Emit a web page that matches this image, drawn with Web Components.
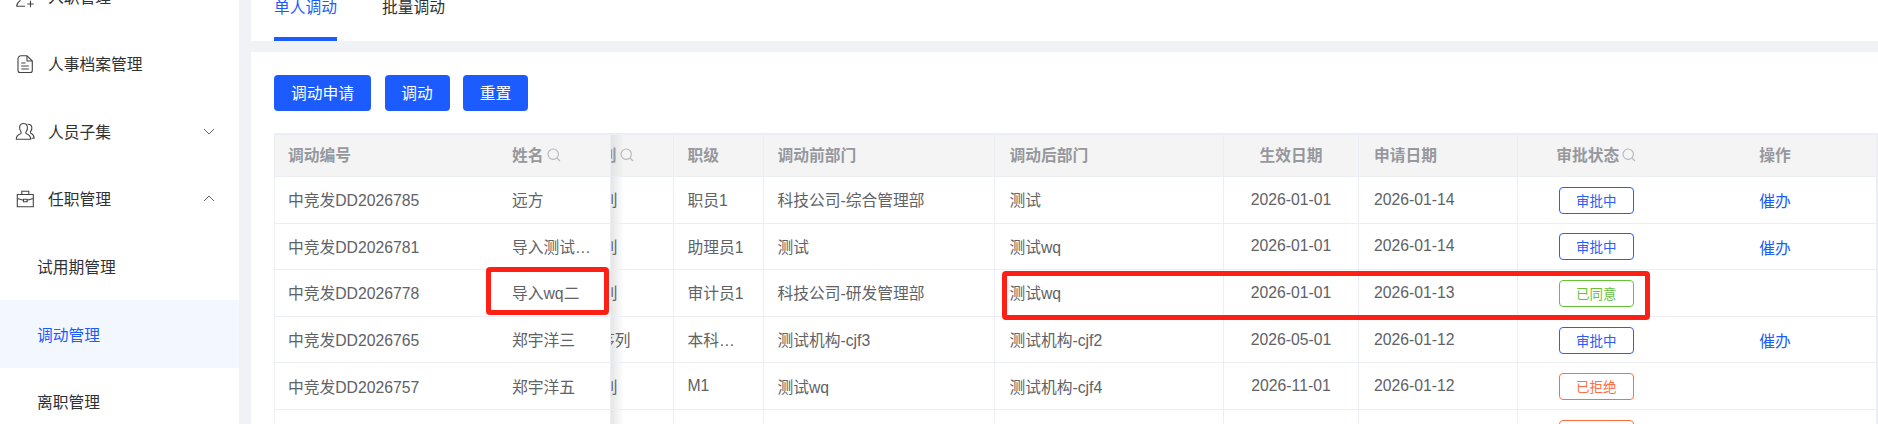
<!DOCTYPE html>
<html lang="zh">
<head>
<meta charset="utf-8">
<title>调动管理</title>
<style>
    html, body { margin: 0; height: 100%; overflow: hidden; background: #f0f2f5; }
    body { font-family: "Liberation Sans", "Noto Sans CJK SC", sans-serif; font-size: 15.75px; }
</style>
</head>
<body>
<hr-page>
    <side-menu slot="side">
        <menu-item icon="add" label="入职管理"></menu-item>
        <menu-item icon="doc" label="人事档案管理"></menu-item>
        <menu-item icon="users" arrow="down" label="人员子集"></menu-item>
        <menu-item icon="case" arrow="up" label="任职管理"></menu-item>
        <menu-item sub label="试用期管理"></menu-item>
        <menu-item sub active label="调动管理"></menu-item>
        <menu-item sub label="离职管理"></menu-item>
    </side-menu>
    <tab-bar slot="tabs">
        <tab-item active>单人调动</tab-item>
        <tab-item>批量调动</tab-item>
    </tab-bar>
    <blue-button slot="actions" style="width:97px">调动申请</blue-button>
    <blue-button slot="actions">调动</blue-button>
    <blue-button slot="actions">重置</blue-button>
    <transfer-table slot="table"></transfer-table>
</hr-page>

<script>
class HrPage extends HTMLElement {
    constructor() {
        super();
        this.attachShadow({ mode: 'open' });
        this.shadowRoot.innerHTML = `
            <style>
                :host {
                    display: flex;
                    position: relative;
                    height: 424px;
                    overflow: hidden;
                    color: #303133;
                }
                .side { width: 239px; flex: none; background: #fff; overflow: hidden; }
                .main { flex: 1; min-width: 0; margin-left: 12px; display: flex; flex-direction: column; }
                .tabs { background: #fff; height: 41px; padding-left: 23px; flex: none; }
                .card { background: #fff; flex: 1; margin-top: 11px; padding-top: 23px; padding-left: 23px; min-height: 0; }
                .actions { display: flex; gap: 13.500px; height: 35.500px; margin-bottom: 22.500px; }
                /* the red marks drawn on the screenshot */
                .mark {
                    position: absolute;
                    box-sizing: border-box;
                    border: 5px solid #ff2015;
                    border-radius: 4px;
                    pointer-events: none;
                }
            </style>
            <div class="side"><slot name="side"></slot></div>
            <div class="main">
                <div class="tabs"><slot name="tabs"></slot></div>
                <div class="card">
                    <div class="actions"><slot name="actions"></slot></div>
                    <slot name="table"></slot>
                </div>
            </div>
            <div class="mark" style="left:486px;top:267px;width:123px;height:47.500px"></div>
            <div class="mark" style="left:1002px;top:270.500px;width:648px;height:49px"></div>
        `;
    }
}

class SideMenu extends HTMLElement {
    constructor() {
        super();
        this.attachShadow({ mode: 'open' });
        this.shadowRoot.innerHTML = `
            <style>
                :host { display: block; margin-top: -37.600px; }
            </style>
            <slot></slot>
        `;
    }
}

const MENU_ICONS = {
    add: '<path d="M1.500 19.300h8.500M1.500 19.300c.4-2.400 1.700-4.500 4-6" stroke-width="1.400"/><path d="M12.300 17h6.400M15.500 13.800v6.400" stroke-width="1.800"/>',
    doc: '<path d="M6 1.800h6L17.300 7V16.500a2 2 0 0 1-2 2H5a2 2 0 0 1-2-2V4.800a3 3 0 0 1 3-3z"/><path d="M12 2v5h5.200M6.300 9h4.200M6.300 12h7.500M6.300 15h7.500"/>',
    users: '<path d="M1.300 17.300c0-3.400 2-4.800 4.300-5.600.7-.3.800-1.300.2-2.200-1-1.300-1.400-2.900-1.200-4.300.3-2.300 1.800-3.700 3.900-3.700s3.600 1.400 3.900 3.700c.2 1.400-.2 3-1.200 4.300-.6.900-.5 1.900.2 2.200 2.300.8 4.300 2.200 4.300 5.600z"/><path d="M12.500 2.300c2-.4 4 .8 4.300 3 .2 1.400-.2 2.800-1.100 4-.5.800-.4 1.700.2 2 1.700.8 3.200 2 3.200 4.900h-2.600"/>',
    case: '<path d="M2.300 5.500h16v12.300h-16zM6.800 5.500V2.200h7v3.300"/><path d="M2.300 9.500l6.200 1.800M18.300 9.500l-6.200 1.800M8.500 10.300h3.600v2.400H8.500z"/>'
};

class MenuItem extends HTMLElement {
    constructor() {
        super();
        this.attachShadow({ mode: 'open' });
    }

    connectedCallback() {
        const icon = this.getAttribute('icon');
        const arrow = this.getAttribute('arrow');
        const chevron = arrow === 'up' ? 'M1 7l5-5 5 5' : 'M1 2l5 5 5-5';
        this.shadowRoot.innerHTML = `
            <style>
                :host {
                    display: flex;
                    align-items: center;
                    height: 67.600px;
                    font-size: 15.750px;
                    color: #303133;
                }
                :host([active]) { background: #f3f7ff; color: #1c5cff; }
                :host([sub]) { padding-left: 37px; }
                .icon { width: 20px; height: 19px; margin-left: 15px; margin-right: 13px; flex: none; overflow: visible; }
                .icon * { fill: none; stroke: #444; stroke-width: 1.100; }
                .label { flex: 1; }
                .arrow { width: 12px; height: 9px; margin-right: 24px; flex: none; fill: none; stroke: #666; stroke-width: 1; }
            </style>
            ${icon ? `<svg class="icon" viewBox="0 0 20 19">${MENU_ICONS[icon]}</svg>` : ''}
            <span class="label">${this.getAttribute('label')}</span>
            ${arrow ? `<svg class="arrow" viewBox="0 0 12 9"><path d="${chevron}"/></svg>` : ''}
        `;
    }
}

class TabBar extends HTMLElement {
    constructor() {
        super();
        this.attachShadow({ mode: 'open' });
        this.shadowRoot.innerHTML = `
            <style>
                :host { display: flex; gap: 45px; height: 41px; }
            </style>
            <slot></slot>
        `;
    }
}

class TabItem extends HTMLElement {
    constructor() {
        super();
        this.attachShadow({ mode: 'open' });
        this.shadowRoot.innerHTML = `
            <style>
                :host {
                    display: block;
                    box-sizing: border-box;
                    height: 41px;
                    line-height: 16px;
                    font-size: 15.750px;
                    color: #303133;
                    white-space: nowrap;
                    border-bottom: 4px solid transparent;
                }
                :host([active]) { color: #1c5cff; border-bottom-color: #1c5cff; }
            </style>
            <slot></slot>
        `;
    }
}

class BlueButton extends HTMLElement {
    constructor() {
        super();
        this.attachShadow({ mode: 'open' });
        this.shadowRoot.innerHTML = `
            <style>
                :host {
                    display: flex;
                    align-items: center;
                    justify-content: center;
                    box-sizing: border-box;
                    width: 65px;
                    height: 35.500px;
                    background: #1c5cff;
                    color: #fff;
                    border-radius: 4px;
                    font-size: 15.750px;
                    white-space: nowrap;
                }
            </style>
            <slot></slot>
        `;
    }
}

class StatusTag extends HTMLElement {
    constructor() {
        super();
        this.attachShadow({ mode: 'open' });
        this.shadowRoot.innerHTML = `
            <style>
                :host {
                    display: flex;
                    align-items: center;
                    justify-content: center;
                    box-sizing: border-box;
                    width: 75px;
                    height: 27px;
                    margin-top: 1px;
                    padding-bottom: 1px;
                    border: 1px solid #2a5cff;
                    border-radius: 4px;
                    color: #2a5cff;
                    font-size: 13.500px;
                    flex: none;
                }
                :host([kind="ok"]) { border-color: #67c23a; color: #67c23a; }
                :host([kind="no"]) { border-color: #ff6e40; color: #ff6e40; }
            </style>
            <slot></slot>
        `;
    }
}

const TRANSFER_HEAD = [
    { text: '调动编号', first: true },
    { text: '姓名', search: true },
    { text: '类别', search: true, cut: true },
    { text: '职级' },
    { text: '调动前部门' },
    { text: '调动后部门' },
    { text: '生效日期', center: true },
    { text: '申请日期', date: true },
    { text: '审批状态', search: true, center: true },
    { text: '操作', center: true }
];

const TRANSFER_ROWS = [
    ['中竞发DD2026785', '远方', '类别', '职员1', '科技公司-综合管理部', '测试', '2026-01-01', '2026-01-14', 'wait', true],
    ['中竞发DD2026781', '导入测试人员', '类别', '助理员1', '测试', '测试wq', '2026-01-01', '2026-01-14', 'wait', true],
    ['中竞发DD2026778', '导入wq二', '类别', '审计员1', '科技公司-研发管理部', '测试wq', '2026-01-01', '2026-01-13', 'ok', false],
    ['中竞发DD2026765', '郑宇洋三', '序列', '本科学历', '测试机构-cjf3', '测试机构-cjf2', '2026-05-01', '2026-01-12', 'wait', true],
    ['中竞发DD2026757', '郑宇洋五', '类别', 'M1', '测试wq', '测试机构-cjf4', '2026-11-01', '2026-01-12', 'no', false],
    ['', '', '', '', '', '', '', '', 'no', false]
];

const STATUS_TEXT = { wait: '审批中', ok: '已同意', no: '已拒绝' };

class TransferTable extends HTMLElement {
    constructor() {
        super();
        this.attachShadow({ mode: 'open' });
    }

    connectedCallback() {
        const search = '<svg class="search" viewBox="0 0 14 14"><circle cx="6.200" cy="6.200" r="5.200"/><path d="M10 10l3 3"/></svg>';
        const head = TRANSFER_HEAD.map(h => `
            <div class="cell head ${h.center ? 'center' : ''} ${h.cut ? 'cut' : ''} ${h.first ? 'first' : ''} ${h.date ? 'date' : ''}"><span class="txt">${h.text}</span>${h.search ? search : ''}</div>
        `).join('');
        const rows = TRANSFER_ROWS.map(r => `
            <div class="cell first">${r[0]}</div>
            <div class="cell"><span class="txt">${r[1]}</span></div>
            <div class="cell cut body ${r[2] === '序列' ? 'long' : ''}"><span class="txt">${r[2]}</span></div>
            <div class="cell"><span class="txt">${r[3]}</span></div>
            <div class="cell">${r[4]}</div>
            <div class="cell">${r[5]}</div>
            <div class="cell center">${r[6]}</div>
            <div class="cell date">${r[7]}</div>
            <div class="cell center"><status-tag kind="${r[8]}">${STATUS_TEXT[r[8]]}</status-tag></div>
            <div class="cell center">${r[9] ? '<span class="link">催办</span>' : ''}</div>
        `).join('');
        this.shadowRoot.innerHTML = `
            <style>
                :host {
                    display: grid;
                    grid-template-columns: 223px 113px 62.500px 90px 231px 229.500px 135px 158.500px 156.500px 203px;
                    grid-template-rows: 42px repeat(6, 46.600px);
                    box-sizing: border-box;
                    border-top: 2px solid #ebeef5;
                    border-left: 1px solid #ebeef5;
                    border-right: 1px solid #ebeef5;
                    font-size: 15.750px;
                    color: #606266;
                }
                .cell {
                    display: flex;
                    align-items: center;
                    min-width: 0;
                    padding: 0 14px;
                    box-sizing: border-box;
                    border-right: 1px solid #ebeef5;
                    border-bottom: 1px solid #ebeef5;
                    white-space: nowrap;
                    overflow: hidden;
                }
                .cell:nth-child(10n) { border-right: none; padding-left: 15px; }
                .cell:nth-child(10n+2) { border-right: none; }
                .cell:nth-child(10n+7) { padding-left: 15px; }
                .first { padding-left: 13px; }
                .date { padding-left: 15px; }
                .head { background: #f4f4f5; color: #96989d; font-weight: 700; padding-bottom: 2px; }
                .center { justify-content: center; }
                .txt { overflow: hidden; text-overflow: ellipsis; }
                .cut {
                    justify-content: flex-end;
                    padding: 0 55px 0 0;
                }
                .cut .txt { overflow: visible; flex: none; }
                .cut.body {
                    background: linear-gradient(to right, rgba(0, 0, 0, .1), rgba(0, 0, 0, 0) 13px);
                }
                .cut.long { padding-right: 42px; }
                .cut.head {
                    background: linear-gradient(to right, rgba(0, 0, 0, .07), rgba(0, 0, 0, 0) 13px) #f4f4f5;
                    padding-right: 39px;
                    padding-bottom: 2px;
                }
                .search { width: 14px; height: 14px; margin-left: 3px; flex: none; fill: none; stroke: #b4b6ba; stroke-width: 1.100; }
                .link { color: #1c5cff; position: relative; top: 1px; }
            </style>
            ${head}
            ${rows}
        `;
    }
}

customElements.define('hr-page', HrPage);
customElements.define('side-menu', SideMenu);
customElements.define('menu-item', MenuItem);
customElements.define('tab-bar', TabBar);
customElements.define('tab-item', TabItem);
customElements.define('blue-button', BlueButton);
customElements.define('status-tag', StatusTag);
customElements.define('transfer-table', TransferTable);
</script>
</body>
</html>
